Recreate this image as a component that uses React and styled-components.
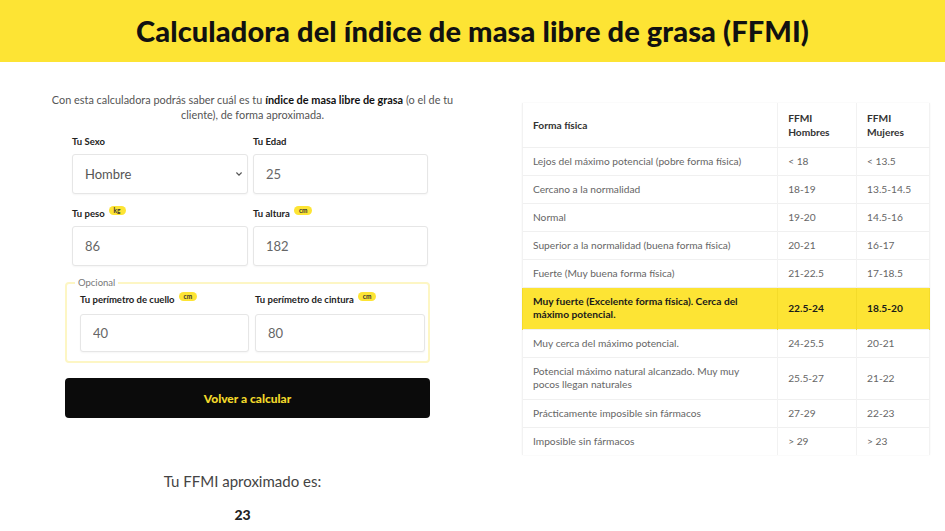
import React from "react";
import styled, { createGlobalStyle } from "styled-components";

const GlobalStyle = createGlobalStyle`
  body {
    margin: 0;
    background: #fff;
    font-family: Lato, "Open Sans", Arial, sans-serif;
    color: #333;
  }
`;

const Header = styled.header`
  height: 62px;
  background-color: #fde434;
  display: flex;
  align-items: center;
  justify-content: center;
`;

const Title = styled.h1`
  margin: 0 0 2px;
  font-size: 29px;
  font-weight: 900;
  color: #111;
  letter-spacing: 0.1px;
`;

const Main = styled.main`
  display: flex;
  gap: 62px;
  padding: 0 15px 0 45px;
`;

const Left = styled.section`
  width: 415px;
  display: flex;
  flex-direction: column;
`;

const Intro = styled.p`
  margin: 30px 0 0;
  font-size: 10.9px;
  line-height: 15px;
  text-align: center;
  color: #555;

  strong {
    color: #111;
    font-weight: 700;
  }
`;

const Form = styled.form`
  width: 365px;
  margin-left: 20px;
  display: flex;
  flex-direction: column;
`;

const FieldGrid = styled.div`
  display: grid;
  grid-template-columns: ${(p) => p.cols || "176px 175px"};
  column-gap: ${(p) => p.colGap || "5px"};
  row-gap: 12px;
  margin: ${(p) => p.margin || "0"};
`;

const Field = styled.label`
  display: flex;
  flex-direction: column;
`;

const Label = styled.span`
  display: flex;
  align-items: center;
  gap: 4px;
  height: 14px;
  font-size: 9.5px;
  font-weight: 700;
  color: #222;
  margin-bottom: ${(p) => p.gap || "6px"};
`;

const Unit = styled.span`
  display: inline-block;
  background: #fde434;
  border-radius: 6px;
  padding: 0 5px;
  font-size: 6.5px;
  line-height: 9px;
  font-weight: 700;
  color: #333;
  margin-top: -6px;
`;

const Input = styled.input`
  box-sizing: border-box;
  width: 100%;
  height: ${(p) => p.h || "40px"};
  border: 1px solid #e6e6e6;
  border-radius: 3px;
  box-shadow: 0 1px 2px rgba(0, 0, 0, 0.04);
  padding: 0 12px;
  font-family: inherit;
  font-size: 13px;
  color: #666;
  background: #fff;
  outline: none;
`;

const SelectWrap = styled.div`
  position: relative;
`;

const Select = styled.select`
  box-sizing: border-box;
  width: 100%;
  height: 40px;
  appearance: none;
  border: 1px solid #e6e6e6;
  border-radius: 3px;
  box-shadow: 0 1px 2px rgba(0, 0, 0, 0.04);
  padding: 0 12px;
  font-family: inherit;
  font-size: 13px;
  color: #555;
  background: #fff;
  outline: none;
`;

const Chevron = styled.svg`
  position: absolute;
  right: 6px;
  top: 18px;
  width: 6px;
  height: 4px;
  pointer-events: none;
`;

const Optional = styled.fieldset`
  margin: 11px 0 0;
  padding: 4px 7px 9px 13px;
  border: 2px solid #fdf6c4;
  border-radius: 4px;
  min-inline-size: 0;
`;

const Legend = styled.legend`
  padding: 0 3px;
  margin-left: -5px;
  font-size: 9.5px;
  color: #777;
`;

const Button = styled.button`
  margin-top: 15px;
  height: 40px;
  border: none;
  border-radius: 4px;
  background: #0b0b0b;
  color: #f2d92a;
  font-family: inherit;
  font-size: 12px;
  font-weight: 900;
  cursor: pointer;
`;

const ResultLabel = styled.p`
  margin: 54px 0 0;
  text-align: center;
  font-size: 15px;
  color: #444;
  width: 395px;
`;

const ResultValue = styled.p`
  margin: 16px 0 0;
  text-align: center;
  font-size: 14px;
  font-weight: 900;
  color: #222;
  width: 395px;
`;

const Right = styled.section`
  width: 408px;
  padding-top: 41px;
`;

const Table = styled.table`
  width: 408px;
  border-collapse: collapse;
  font-size: 10.2px;
  color: #666;
  box-shadow: 0 0 2px rgba(0, 0, 0, 0.05);

  col.c1 { width: 256px; }
  col.c2 { width: 79px; }
  col.c3 { width: 73px; }
`;

const Row = styled.tr`
  height: ${(p) => p.h || 28}px;
  background: ${(p) => (p.hl ? "#fde434" : "#fff")};
  color: ${(p) => (p.hl ? "#1a1a1a" : "#666")};
  font-weight: ${(p) => (p.hl ? 700 : 400)};
`;

const Th = styled.th`
  text-align: left;
  font-weight: 700;
  color: #333;
  padding: 0 10px;
  line-height: 14px;
  border-bottom: 1px solid #f0f0f0;
  border-left: 1px solid #f2f2f2;
  border-right: 1px solid #f2f2f2;
`;

const Td = styled.td`
  padding: 0 ${(p) => p.padRight || "10px"} 0 10px;
  line-height: 13px;
  border-top: 1px solid #f0f0f0;
  border-left: 1px solid ${(p) => (p.hl ? "#f4db2a" : "#f2f2f2")};
  border-right: 1px solid ${(p) => (p.hl ? "#f4db2a" : "#f2f2f2")};
`;

const rows = [
  ["Lejos del máximo potencial (pobre forma física)", "< 18", "< 13.5"],
  ["Cercano a la normalidad", "18-19", "13.5-14.5"],
  ["Normal", "19-20", "14.5-16"],
  ["Superior a la normalidad (buena forma física)", "20-21", "16-17"],
  ["Fuerte (Muy buena forma física)", "21-22.5", "17-18.5"],
  ["Muy fuerte (Excelente forma física). Cerca del máximo potencial.", "22.5-24", "18.5-20", 42, true],
  ["Muy cerca del máximo potencial.", "24-25.5", "20-21"],
  ["Potencial máximo natural alcanzado. Muy muy pocos llegan naturales", "25.5-27", "21-22", 42],
  ["Prácticamente imposible sin fármacos", "27-29", "22-23"],
  ["Imposible sin fármacos", "> 29", "> 23"],
];

function App() {
  return (
    <>
      <GlobalStyle />
      <Header>
        <Title>Calculadora del índice de masa libre de grasa (FFMI)</Title>
      </Header>
      <Main>
        <Left>
          <Intro>
            Con esta calculadora podrás saber cuál es tu{" "}
            <strong>índice de masa libre de grasa</strong> (o el de tu
            <br />
            cliente), de forma aproximada.
          </Intro>
          <Form onSubmit={(e) => e.preventDefault()}>
            <FieldGrid margin="12px 2px 0 7px">
              <Field>
                <Label>Tu Sexo</Label>
                <SelectWrap>
                  <Select defaultValue="Hombre">
                    <option>Hombre</option>
                    <option>Mujer</option>
                  </Select>
                  <Chevron viewBox="0 0 8 5">
                    <path d="M0.5 0.5 L4 4 L7.5 0.5" fill="none" stroke="#555" strokeWidth="1.6" />
                  </Chevron>
                </SelectWrap>
              </Field>
              <Field>
                <Label>Tu Edad</Label>
                <Input defaultValue="25" />
              </Field>
              <Field>
                <Label>
                  Tu peso <Unit>kg</Unit>
                </Label>
                <Input defaultValue="86" />
              </Field>
              <Field>
                <Label>
                  Tu altura <Unit>cm</Unit>
                </Label>
                <Input defaultValue="182" />
              </Field>
            </FieldGrid>
            <Optional>
              <Legend>Opcional</Legend>
              <FieldGrid cols="169px 170px" colGap="6px">
                <Field>
                  <Label gap="8px">
                    Tu perímetro de cuello <Unit>cm</Unit>
                  </Label>
                  <Input h="38px" defaultValue="40" />
                </Field>
                <Field>
                  <Label gap="8px">
                    Tu perímetro de cintura <Unit>cm</Unit>
                  </Label>
                  <Input h="38px" defaultValue="80" />
                </Field>
              </FieldGrid>
            </Optional>
            <Button type="submit">Volver a calcular</Button>
          </Form>
          <ResultLabel>Tu FFMI aproximado es:</ResultLabel>
          <ResultValue>23</ResultValue>
        </Left>
        <Right>
          <Table>
            <colgroup>
              <col className="c1" />
              <col className="c2" />
              <col className="c3" />
            </colgroup>
            <thead>
              <Row h={44}>
                <Th>Forma física</Th>
                <Th>
                  FFMI
                  <br />
                  Hombres
                </Th>
                <Th>
                  FFMI
                  <br />
                  Mujeres
                </Th>
              </Row>
            </thead>
            <tbody>
              {rows.map(([name, men, women, h, hl]) => (
                <Row key={name} h={h} hl={hl}>
                  <Td hl={hl} padRight="30px">{name}</Td>
                  <Td hl={hl}>{men}</Td>
                  <Td hl={hl}>{women}</Td>
                </Row>
              ))}
            </tbody>
          </Table>
        </Right>
      </Main>
    </>
  );
}

export default App;
